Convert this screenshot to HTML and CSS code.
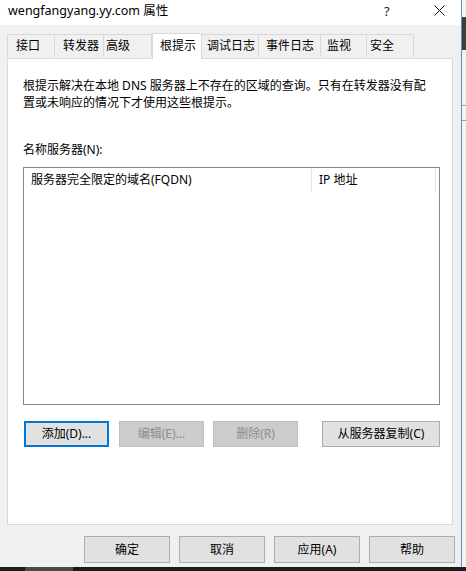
FILE: index.html
```html
<!DOCTYPE html>
<html lang="zh-CN">
<head>
  <meta charset="UTF-8">
  <title>wengfangyang.yy.com 属性</title>
  <link rel="stylesheet" href="styles.css">
</head>
<body>
  <div class="desktop">
    <div class="screen">
      <div class="window">
        <div class="titlebar">
          <span class="title">wengfangyang.yy.com 属性</span>
          <span class="help">?</span>
          <span class="close">
            <svg width="11" height="11" viewBox="0 0 11 11">
              <path d="M0.5 0.5 L10.5 10.5 M10.5 0.5 L0.5 10.5" stroke="#111" stroke-width="1"/>
            </svg>
          </span>
        </div>

        <div class="tabs">
          <div class="tab t1">接口</div>
          <div class="tab t2">转发器</div>
          <div class="tab t3">高级</div>
          <div class="tab t4 active">根提示</div>
          <div class="tab t5">调试日志</div>
          <div class="tab t6">事件日志</div>
          <div class="tab t7">监视</div>
          <div class="tab t8">安全</div>
        </div>

        <div class="panel">
          <p class="desc">根提示解决在本地 DNS 服务器上不存在的区域的查询。只有在转发器没有配<br>置或未响应的情况下才使用这些根提示。</p>
          <div class="label">名称服务器(N):</div>
          <div class="listbox">
            <div class="list-head">
              <div class="col col-name">服务器完全限定的域名(FQDN)</div>
              <div class="col col-ip">IP 地址</div>
              <div class="col col-rest"></div>
            </div>
          </div>
          <div class="list-buttons">
            <button class="btn focused">添加(D)...</button>
            <button class="btn disabled">编辑(E)...</button>
            <button class="btn disabled">删除(R)</button>
            <button class="btn wide">从服务器复制(C)</button>
          </div>
        </div>

        <div class="footer-buttons">
          <button class="btn big">确定</button>
          <button class="btn big">取消</button>
          <button class="btn big">应用(A)</button>
          <button class="btn big">帮助</button>
        </div>
      </div>
      <div class="outside">
        <div class="outside-dark"></div>
        <div class="outside-line"></div>
        <div class="outside-line second"></div>
      </div>
    </div>
    <div class="taskbar">
      <div class="task-item"></div>
    </div>
  </div>
</body>
</html>
```

FILE: styles.css
```css
body {
  margin: 0;
  padding: 0;
  font-family: "Noto Sans", "Noto Sans CJK SC", sans-serif;
  font-size: 12px;
  color: #000;
  overflow: hidden;
}
.desktop {
  width: 466px;
  height: 571px;
  display: flex;
  flex-direction: column;
}
.screen {
  display: flex;
  height: 567px;
}
.window {
  width: 461px;
  border-right: 1px solid #5b8fc9;
  background-color: #f0f0f0;
  display: flex;
  flex-direction: column;
}
.titlebar {
  height: 25px;
  background-color: #fff;
  display: flex;
  align-items: center;
  padding-left: 8px;
}
.title {
  font-size: 12.5px;
  flex: 1;
  line-height: 16px;
  padding-bottom: 4px;
}
.help {
  width: 14px;
  font-size: 13px;
  margin-right: 36px;
  padding-bottom: 4px;
  color: #222;
}
.close {
  width: 11px;
  margin-right: 16px;
  display: flex;
  padding-bottom: 4px;
}
.tabs {
  display: flex;
  align-items: flex-end;
  height: 33px;
  padding-left: 7px;
  position: relative;
  z-index: 1;
}
.tab {
  height: 23px;
  box-sizing: border-box;
  border: 1px solid #d9d9d9;
  border-bottom: none;
  border-left: none;
  background-color: #f0f0f0;
  line-height: 22px;
  margin-bottom: 1px;
  white-space: nowrap;
}
.tab.t1 { width: 48px; padding-left: 8px; border-left: 1px solid #d9d9d9; }
.tab.t2 { width: 49px; padding-left: 8px; }
.tab.t3 { width: 48px; padding-left: 2px; }
.tab.t4 { width: 50px; padding-left: 7px; }
.tab.t5 { width: 57px; padding-left: 5px; }
.tab.t6 { width: 62px; padding-left: 7px; }
.tab.t7 { width: 46px; padding-left: 6px; }
.tab.t8 { width: 47px; padding-left: 3px; }
.tab.active {
  height: 26px;
  background-color: #fff;
  border-left: 1px solid #d9d9d9;
  margin-bottom: -1px;
  line-height: 24px;
  padding-bottom: 3px;
}
.tab.t5 { border-left: none; }
.panel {
  margin-left: 7px;
  width: 446px;
  height: 467px;
  box-sizing: border-box;
  background-color: #fff;
  border: 1px solid #d9d9d9;
  padding: 18px 12px 0 15px;
  display: flex;
  flex-direction: column;
}
.desc {
  margin: 0;
  line-height: 17px;
  white-space: nowrap;
}
.label {
  margin-top: 30px;
  line-height: 17px;
}
.listbox {
  margin-top: 9px;
  height: 238px;
  box-sizing: border-box;
  border: 1px solid #828790;
  background-color: #fff;
}
.list-head {
  display: flex;
  height: 24px;
}
.col {
  line-height: 24px;
  box-sizing: border-box;
  border-right: 1px solid #e5e5e5;
  white-space: nowrap;
}
.col-name {
  width: 288px;
  padding-left: 7px;
}
.col-ip {
  width: 124px;
  padding-left: 7px;
}
.col-rest {
  width: 3px;
  border-right: none;
}
.list-buttons {
  display: flex;
  margin-top: 16px;
  padding-left: 1px;
}
.btn {
  font-family: "Noto Sans", "Noto Sans CJK SC", sans-serif;
  font-size: 12px;
  height: 26px;
  width: 85px;
  padding: 0;
  box-sizing: border-box;
  background-color: #e1e1e1;
  border: 1px solid #adadad;
  color: #000;
  line-height: 22px;
  margin-right: 10px;
}
.btn.focused {
  border: 2px solid #0078d7;
}
.btn.disabled {
  background-color: #cccccc;
  border-color: #bfbfbf;
  color: #8c8c8c;
  margin-right: 9px;
}
.btn.wide {
  width: 118px;
  margin-left: auto;
  margin-right: 0;
}
.footer-buttons {
  display: flex;
  justify-content: flex-end;
  gap: 9px;
  margin-top: 11px;
  padding-right: 6px;
}
.btn.big {
  width: 86px;
  height: 27px;
  margin: 0;
}
.outside {
  flex: 1;
  background-color: #f2f4f7;
  display: flex;
  flex-direction: column;
}
.outside-dark {
  height: 33px;
  margin-top: 17px;
  background-color: #3d3d3d;
}
.outside-line {
  height: 1px;
  margin-top: 55px;
  background-color: #9aa0a8;
}
.outside-line.second {
  margin-top: 14px;
}
.taskbar {
  height: 4px;
  background-color: #1b1b1b;
  display: flex;
}
.task-item {
  width: 48px;
  margin-left: 25px;
  background-color: #4a4a4a;
}
```
